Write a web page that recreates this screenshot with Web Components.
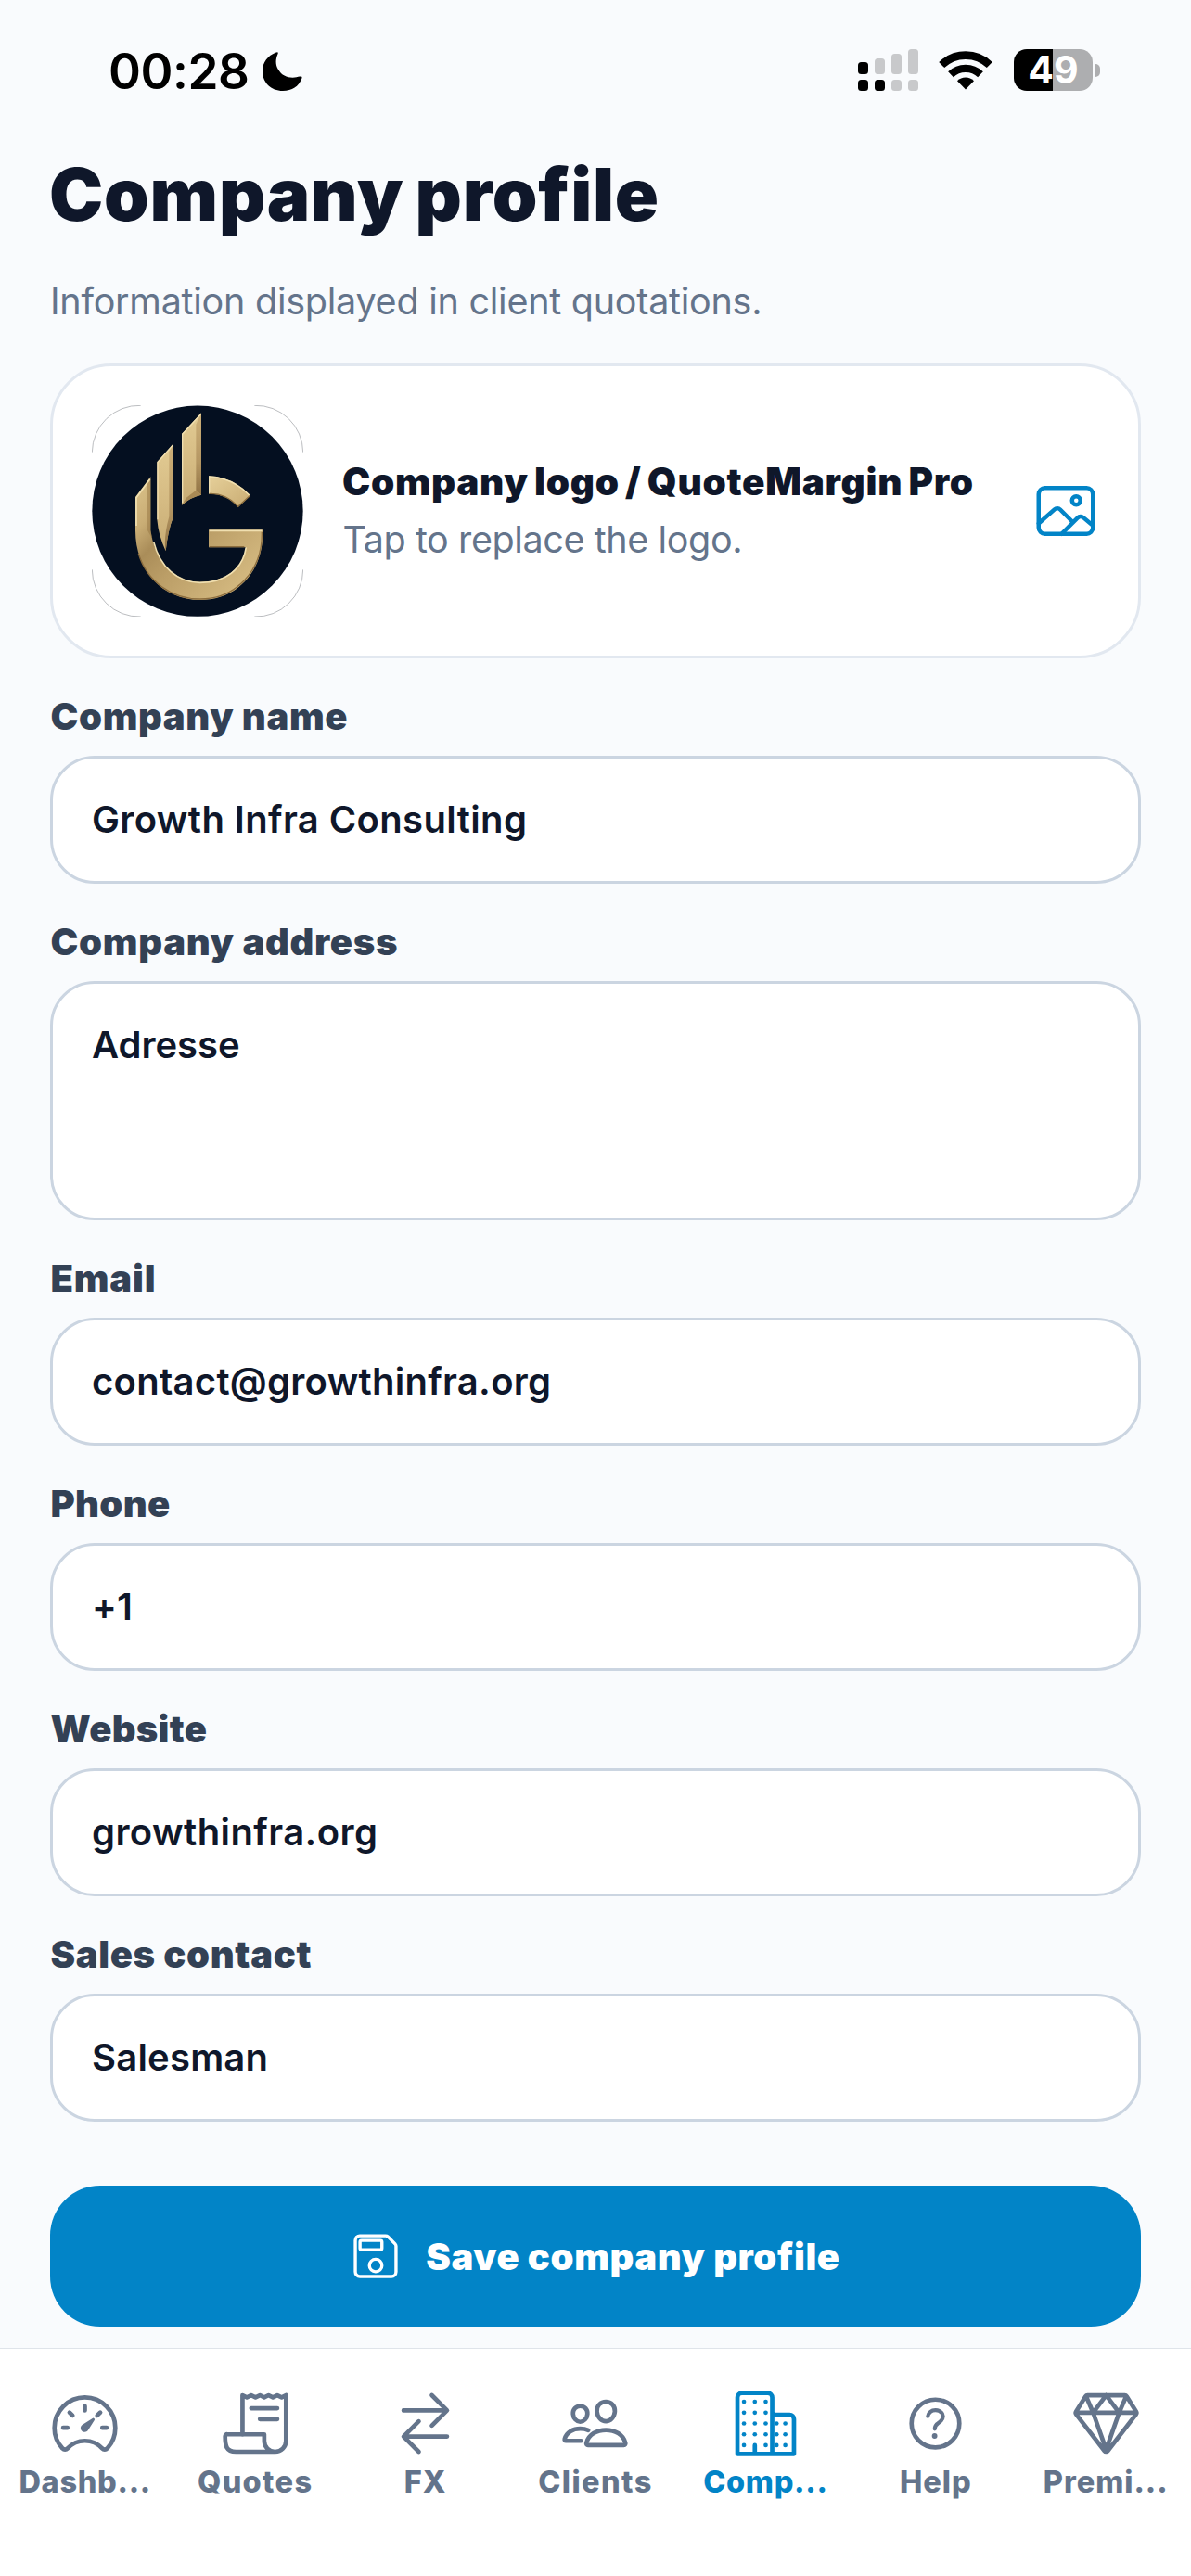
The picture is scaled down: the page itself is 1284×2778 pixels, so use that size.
<!DOCTYPE html>
<html lang="en">
<head>
<meta charset="utf-8">
<title>Company profile</title>
<style>
html,body{margin:0;padding:0}
body{width:1284px;height:2778px;overflow:hidden;background:#f9fbfd;font-family:Inter,"Liberation Sans",sans-serif;color:#0f172a}
</style>
</head>
<body>
<app-screen>
  <status-bar slot="status" time="00:28" battery="49"></status-bar>
  <page-heading heading="Company profile">Information displayed in client quotations.</page-heading>
  <logo-card heading="Company logo / QuoteMargin Pro">Tap to replace the logo.</logo-card>
  <form-field label="Company name" style="--tracking:.38px">Growth Infra Consulting</form-field>
  <form-field label="Company address" multiline style="--tracking:0;--label-tracking:.7px">Adresse</form-field>
  <form-field label="Email" style="--tracking:.28px;--label-tracking:.8px">contact@growthinfra.org</form-field>
  <form-field label="Phone" style="--label-tracking:.3px">+1</form-field>
  <form-field label="Website" style="--tracking:.42px;--label-tracking:.3px">growthinfra.org</form-field>
  <form-field label="Sales contact">Salesman</form-field>
  <save-button>Save company profile</save-button>
  <tab-bar slot="tabs">
    <tab-item icon="speedometer" style="--tracking:.71px">Dashb...</tab-item>
    <tab-item icon="receipt" style="--tracking:1.34px">Quotes</tab-item>
    <tab-item icon="swap">FX</tab-item>
    <tab-item icon="people" style="--tracking:1.4px">Clients</tab-item>
    <tab-item icon="business" active style="--tracking:.7px">Comp...</tab-item>
    <tab-item icon="help">Help</tab-item>
    <tab-item icon="diamond">Premi...</tab-item>
  </tab-bar>
</app-screen>
<script>
const define = (name, render) => customElements.define(name, class extends HTMLElement {
  constructor() { super(); this.attachShadow({ mode: "open" }); }
  connectedCallback() { this.shadowRoot.innerHTML = render(this); }
});

const icons = {
  image: `<rect x="48" y="80" width="416" height="352" rx="48"/><circle cx="336" cy="176" r="32"/><path d="M304 335.79l-90.66-90.49a32 32 0 00-43.87-1.3L48 352M224 432l123.34-123.34a32 32 0 0143.11-2L464 368"/>`,
  save: `<path d="M380.93 57.37A32 32 0 00358.3 48H94.22A46.21 46.21 0 0048 94.22v323.56A46.21 46.21 0 0094.22 464h323.56A46.36 46.36 0 00464 417.78V153.7a32 32 0 00-9.37-22.63zM256 416a64 64 0 1164-64 63.92 63.92 0 01-64 64zm48-224H112a16 16 0 01-16-16v-64a16 16 0 0116-16h192a16 16 0 0116 16v64a16 16 0 01-16 16z"/>`,
  speedometer: `<path fill="currentColor" stroke="none" d="M326.1 231.9l-47.5 75.5a31 31 0 01-7 7 30.11 30.11 0 01-35-49l75.5-47.5a10.23 10.23 0 0111.7 0 10.06 10.06 0 012.3 14z"/><path d="M256 64C132.3 64 32 164.2 32 287.9a223.18 223.18 0 0056.3 148.5c1.1 1.2 2.1 2.4 3.2 3.5a25.19 25.19 0 0037.1-.1 173.13 173.13 0 01254.8 0 25.19 25.19 0 0037.1.1l3.2-3.5A223.18 223.18 0 00480 287.9C480 164.2 379.7 64 256 64z"/><path d="M256 128v32M416 288h-32M128 288H96M165.49 197.49l-22.63-22.63M346.51 197.49l22.63-22.63"/>`,
  receipt: `<path d="M160 336V48l32 16 32-16 31.94 16 32.37-16L320 64l31.79-16 31.93 16L416 48l32.01 16L480 48v224"/><path d="M480 272v112a80 80 0 01-80 80h0a80 80 0 01-80-80v-48H48a15.86 15.86 0 00-16 16c0 64 6.74 112 80 112h288M224 144h192M288 224h128"/>`,
  swap: `<path d="M304 48l112 112-112 112M398.87 160H96M208 464L96 352l112-112M114 352h302"/>`,
  people: `<path d="M402 168c-2.93 40.67-33.1 72-66 72s-63.12-31.32-66-72c-3-42.31 26.37-72 66-72s69 30.46 66 72z"/><path d="M336 304c-65.17 0-127.84 32.37-143.54 95.41-2.08 8.34 3.15 16.59 11.72 16.59h263.65c8.57 0 13.77-8.25 11.72-16.59C463.85 335.36 401.18 304 336 304z"/><path d="M200 185.94c-2.34 32.48-26.72 58.06-53 58.06s-50.7-25.57-53-58.06C91.61 152.15 115.34 128 147 128s55.39 24.77 53 57.94z"/><path d="M206 306c-18.05-8.27-37.93-11.45-59-11.45-52 0-102.1 25.85-114.65 76.2-1.65 6.66 2.53 13.25 9.37 13.25H154"/>`,
  business: `<path d="M176 416v64M80 32h192a32 32 0 0132 32v412a4 4 0 01-4 4H48V64a32 32 0 0132-32zM320 192h112a32 32 0 0132 32v256H304V208a16 16 0 0116-16z"/><g fill="currentColor" stroke="none">` +
    [[96,96],[176,96],[256,96],[96,176],[176,176],[256,176],[96,256],[176,256],[256,256],[336,256],[400,256],[96,336],[176,336],[256,336],[336,336],[400,336],[96,416],[256,416],[336,416],[400,416]].map(([x, y]) => `<circle cx="${x}" cy="${y}" r="16"/>`).join("") + `</g>`,
  help: `<path d="M256 80a176 176 0 10176 176A176 176 0 00256 80z"/><path stroke-width="28" d="M200 202.29s.84-17.5 19.57-32.57C230.68 160.77 244 158.18 256 158c10.93-.14 20.69 1.67 26.53 4.45 10 4.76 29.47 16.38 29.47 41.09 0 26-17 37.81-36.37 50.8S251 281.43 251 296"/><circle cx="250" cy="348" r="20" fill="currentColor" stroke="none"/>`,
  diamond: `<path d="M35.42 188.21l207.75 269.46a16.17 16.17 0 0025.66 0l207.75-269.46a16.52 16.52 0 00.95-18.75L407.06 55.71A16.22 16.22 0 00393.27 48H118.73a16.22 16.22 0 00-13.79 7.71L34.47 169.46a16.52 16.52 0 00.95 18.75zM48 176h416M400 64l-48 112-96-128M112 64l48 112 96-128M256 448l-96-272M256 448l96-272"/>`
};
define("line-icon", el => `<style>:host{display:block;flex:none}svg{display:block;width:100%;height:100%;overflow:visible}</style>
<svg viewBox="0 0 512 512" fill="none" stroke="currentColor" stroke-width="32" stroke-linecap="round" stroke-linejoin="round">${icons[el.getAttribute("name")]}</svg>`);

define("app-screen", () => `<style>
:host{display:flex;flex-direction:column;width:1284px;height:2778px}
main{flex:1;min-height:0;display:flex;flex-direction:column;padding:0 54px}
</style><slot name="status"></slot><main><slot></slot></main><slot name="tabs"></slot>`);

define("status-bar", el => `<style>
:host{display:flex;align-items:center;height:151px;padding:0 98px 11px 117px;color:#000}
.time{font-size:53px;line-height:60px;font-weight:600;letter-spacing:-.46px;padding-top:3px;width:166px;white-space:nowrap}
svg{display:block}
.moon{margin-top:2px}
.right{display:flex;align-items:center;margin-left:auto}
.wifi{margin:0 23px 0 22px}
.battery{display:flex;align-items:center;justify-content:center;width:85px;height:45px;border-radius:14px;background:linear-gradient(90deg,#000 42px,#adaeb0 42px);color:#fff;font-size:41px;font-weight:700;line-height:45px}
.nub{width:5px;height:14px;margin-left:3px;border-radius:0 6px 6px 0;background:#adaeb0}
</style>
<div class="time">${el.getAttribute("time")}</div>
<svg class="moon" width="43" height="42" viewBox="0 0 43 42"><path d="M14 .8C16.8-.4 17.2.4 16.4 2.6 14 8.500 13.800 14 17 19c3.500 6 9 8.700 15.500 8.700 3 0 5.500-.7 7.500-1.100 2.500-.5 3 .3 2.200 2.400C39 37 32 42 22 42 9 42 0 33 0 20.500 0 11 6 4 14 .8z"/></svg>
<div class="right">
<svg width="65" height="45" viewBox="0 0 65 45"><g fill="#c8c9cb"><rect x="18" y="10" width="11" height="17" rx="3.500"/><rect x="36" y="5" width="11" height="22" rx="3.500"/><rect x="54" y="0" width="11" height="27" rx="3.500"/><rect x="36" y="33" width="11" height="12" rx="3.500"/><rect x="54" y="33" width="11" height="12" rx="3.500"/></g><rect y="14" width="11" height="13" rx="3.500"/><rect y="33" width="11" height="12" rx="3.500"/><rect x="18" y="33" width="11" height="12" rx="3.500"/></svg>
<svg class="wifi" width="58" height="43" viewBox="0 0 58 43"><g fill="none" stroke="#000"><path stroke-width="8.600" d="M3.200 16a37.200 37.200 0 0151.600 0"/><path stroke-width="8.200" d="M13 26.300a23 23 0 0132 0"/></g><path d="M29 42.500L20 33.300a12.700 12.700 0 0118 0z"/></svg>
<div class="battery">${el.getAttribute("battery")}</div><div class="nub"></div>
</div>`);

define("page-heading", el => `<style>
:host{display:block}
h1{margin:0 0 0 -1px;font-size:78px;line-height:96px;font-weight:900;letter-spacing:.75px;word-spacing:-4px;white-space:nowrap}
p{margin:40px 0 0;font-size:39.500px;line-height:54px;letter-spacing:-.25px;color:#64748b;white-space:nowrap}
</style><h1>${el.getAttribute("heading")}</h1><p><slot></slot></p>`);

define("brand-logo", () => `<style>:host{display:block;flex:none;width:228px;height:228px}svg{display:block}</style>
<svg width="228" height="228" viewBox="147 170 684 684">
<defs>
<linearGradient id="a" x1="0" y1="0" x2="0" y2="1"><stop offset="0" stop-color="#e2cb93"/><stop offset=".5" stop-color="#d6bc84"/><stop offset="1" stop-color="#c8ac74"/></linearGradient>
<linearGradient id="b" x1="0" y1="0" x2="0" y2="1"><stop offset="0" stop-color="#cdb079"/><stop offset=".6" stop-color="#b59763"/><stop offset="1" stop-color="#917345"/></linearGradient>
<linearGradient id="c" gradientUnits="userSpaceOnUse" x1="290" y1="400" x2="640" y2="740"><stop offset="0" stop-color="#dcc48c"/><stop offset=".25" stop-color="#c9ad75"/><stop offset=".4" stop-color="#aa8d59"/><stop offset=".6" stop-color="#bb9e67"/><stop offset="1" stop-color="#d3b87f"/></linearGradient>
<linearGradient id="d" x1="0" y1="0" x2="1" y2="1"><stop offset="0" stop-color="#e6d09a"/><stop offset="1" stop-color="#c8ab72"/></linearGradient>
</defs>
<circle cx="489" cy="512.500" r="341" fill="#040f20"/>
<g fill="none" stroke="#8d9096" stroke-width="1.800"><path d="M148 322a152 152 0 01157-151M673 171a152 152 0 01157 151M830 702a152 152 0 01-157 152M305 854a152 152 0 01-157-152"/></g>
<path fill="url(#c)" d="M288 467L337 402V575C352 680 418 742 497 742 580 742 638 695 645 630H525V573H700C704 710 615 800 497 800 375 800 288 705 288 575z"/>
<path fill="#9c7d4a" opacity=".6" d="M325 425L337 402V575L343 602 325 572z"/>
<path fill="none" stroke="#f0dfb0" stroke-width="5" d="M291 560V469L335 409M527 576H697M347 612C368 695 425 744 497 744 580 744 635 700 646 630"/>
<path fill="none" stroke="#8c6d3e" stroke-width="4" d="M697 580C700 705 612 797 497 797 405 797 325 740 298 650M527 628H640"/>
<path fill="url(#a)" d="M358 353L411 295V530Q393 575 386 642Q362 590 358 540z"/>
<path fill="url(#b)" d="M397 320L411 295V530Q393 575 386 642Q378 600 397 530z"/>
<path fill="none" stroke="#f0dfb0" stroke-width="4" d="M360 540V355L409 299"/>
<path fill="url(#a)" d="M438 262L501 195V460Q465 468 438 493z"/>
<path fill="url(#b)" d="M484 232L501 195V460L484 445z"/>
<path fill="#a98a55" d="M438 493L452 470 484 445 501 460Q465 468 438 493z"/>
<path fill="none" stroke="#f0dfb0" stroke-width="4" d="M440 486V264L499 200"/>
<path fill="url(#d)" d="M525 399Q605 402 660 462L620 500Q582 455 525 457z"/>
<path fill="none" stroke="#f0dfb0" stroke-width="4" d="M527 455V401Q602 404 657 462"/>
<path fill="none" stroke="#8c6d3e" stroke-width="4" d="M527 456Q582 454 620 498L659 462"/>
</svg>`);

define("logo-card", el => `<style>
:host{display:flex;align-items:center;box-sizing:border-box;height:318px;margin-top:40px;padding:0 42px;gap:42px;border:3px solid #e2e8f0;border-radius:66px;background:#fff}
.copy{flex:1;white-space:nowrap}
.title{font-size:40.500px;line-height:54px;font-weight:900;letter-spacing:.72px;word-spacing:-2.500px}
.sub{margin-top:8px;padding-left:.5px;font-size:39.500px;line-height:54px;letter-spacing:-.4px;color:#64748b}
line-icon{width:72px;height:72px;color:#0284c7}
</style><brand-logo></brand-logo><div class="copy"><div class="title">${el.getAttribute("heading")}</div><div class="sub"><slot></slot></div></div><line-icon name="image"></line-icon>`);

define("form-field", el => `<style>
:host{display:flex;flex-direction:column;gap:18px;margin-top:39px}
.label{padding-left:.5px;font-size:40px;line-height:48px;font-weight:900;letter-spacing:var(--label-tracking,.63px);color:#334155;white-space:nowrap}
.box{box-sizing:border-box;height:138px;padding:42px;border:3px solid #cbd5e1;border-radius:48px;background:#fff;font-size:40px;line-height:48px;font-weight:600;letter-spacing:var(--tracking,.21px);white-space:nowrap}
:host([multiline]) .box{height:258px}
</style><div class="label">${el.getAttribute("label")}</div><div class="box"><slot></slot></div>`);

define("save-button", () => `<style>
:host{display:flex;align-items:center;justify-content:center;gap:27px;height:152px;margin-top:69px;border-radius:54px;background:#0284c7;color:#fff;font-size:40px;font-weight:900;letter-spacing:.6px;white-space:nowrap}
line-icon{width:54px;height:54px}
</style><line-icon name="save"></line-icon><span><slot></slot></span>`);

define("tab-bar", () => `<style>
:host{display:flex;box-sizing:border-box;height:246px;border-top:1px solid #dfe4ea;background:#fff}
</style><slot></slot>`);

define("tab-item", el => `<style>
:host{flex:1 1 0;min-width:0;display:flex;flex-direction:column;align-items:center;gap:6px;padding-top:43px;color:#64748b;font-size:32.500px;line-height:39px;font-weight:800;letter-spacing:var(--tracking,.95px);white-space:nowrap}
:host([active]){color:#0284c7}
line-icon{width:75px;height:75px}
</style><line-icon name="${el.getAttribute("icon")}"></line-icon><span><slot></slot></span>`);
</script>
</body>
</html>
